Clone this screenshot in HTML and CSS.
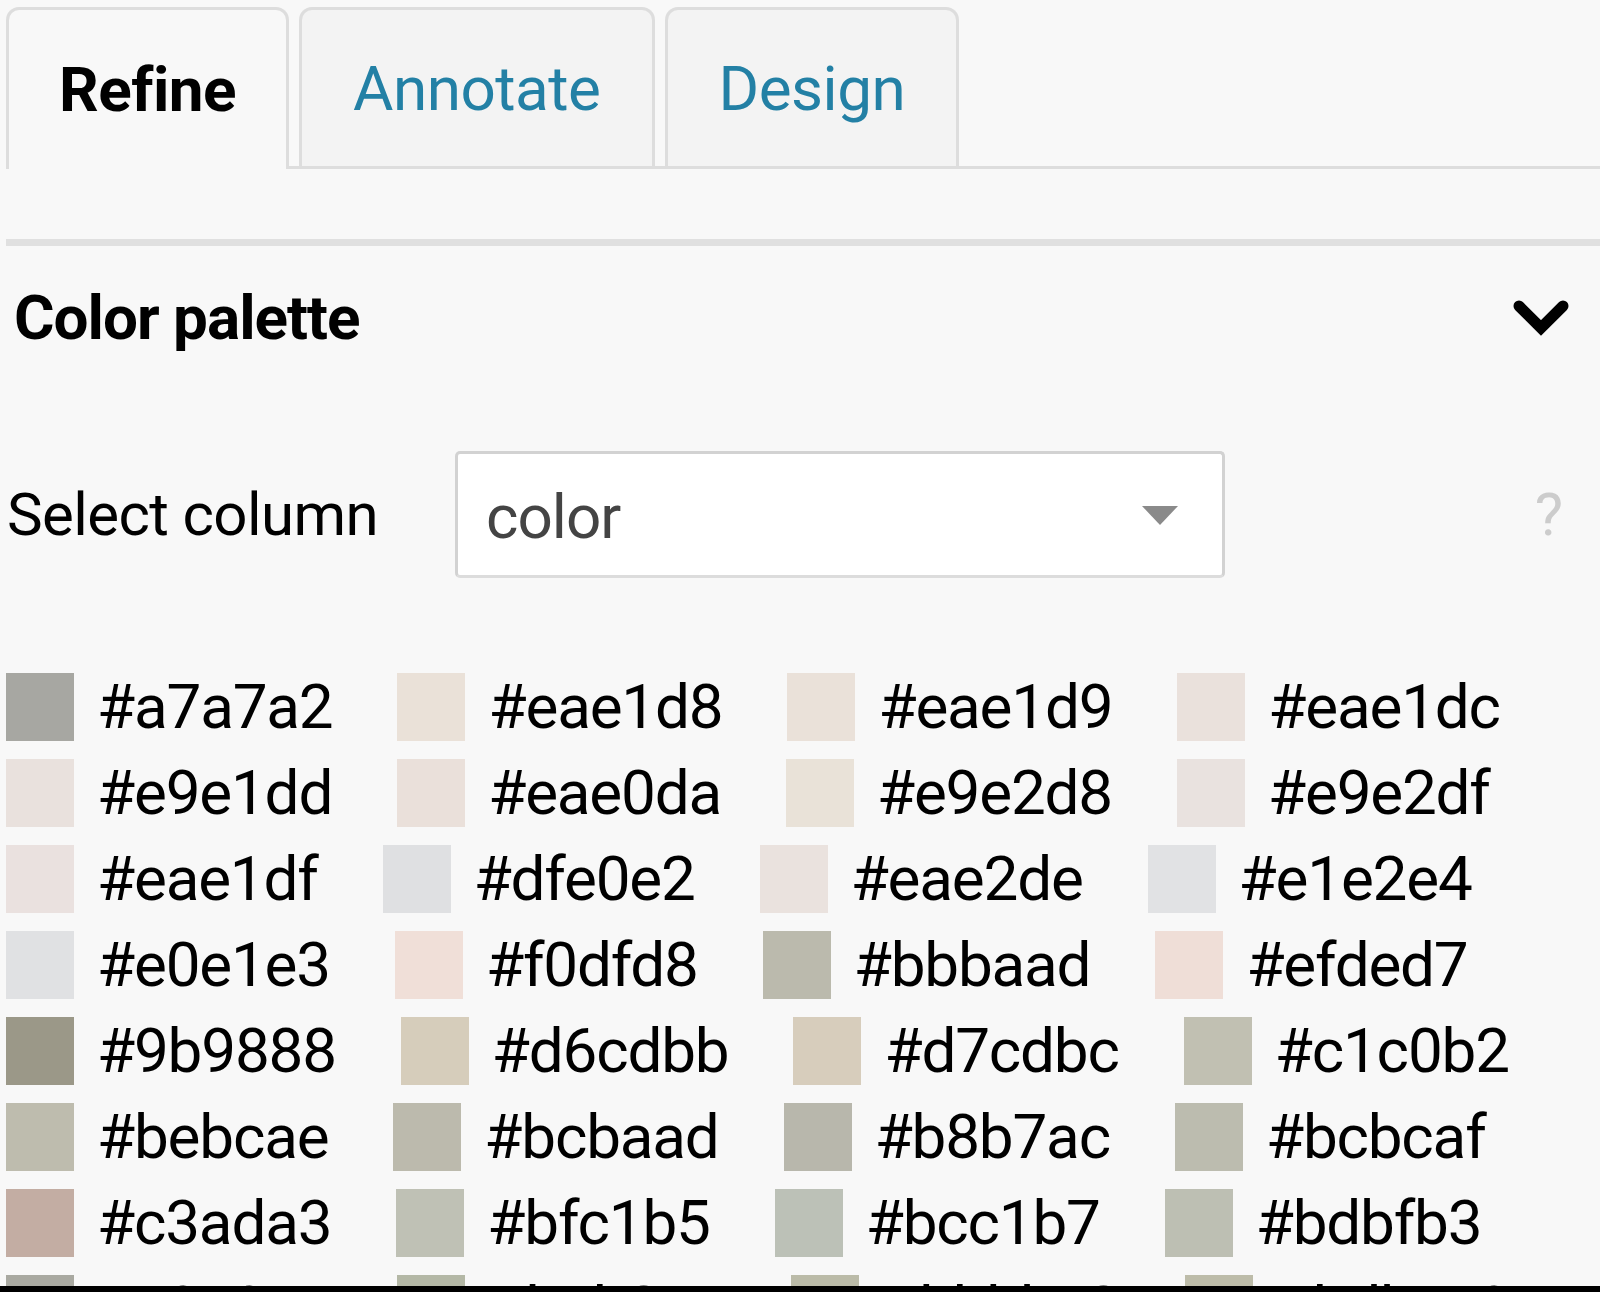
FILE: index.html
```html
<!DOCTYPE html>
<html lang="en">
<head>
<meta charset="utf-8">
<title>Color palette</title>
<link rel="stylesheet" href="styles.css">
</head>
<body>
<div class="page">
  <ul class="tabs">
    <li class="tab active">Refine</li>
    <li class="tab">Annotate</li>
    <li class="tab">Design</li>
  </ul>
  <div class="band"></div>
  <section class="panel">
    <div class="panel-head">
      <h2 class="panel-title">Color palette</h2>
      <svg class="chevron" width="60" height="42" viewBox="0 0 60 42" aria-hidden="true">
        <path d="M8 9 L30 31 L52 9" fill="none" stroke="#000" stroke-width="11" stroke-linecap="round" stroke-linejoin="miter"/>
      </svg>
    </div>
    <div class="field">
      <label class="field-label">Select column</label>
      <div class="select">
        <span class="select-value">color</span>
        <span class="caret"></span>
      </div>
      <span class="help">?</span>
    </div>
    <div class="swatches">
      <div class="item"><span class="chip" style="background:#a7a7a2"></span><span class="hex">#a7a7a2</span></div>
      <div class="item"><span class="chip" style="background:#eae1d8"></span><span class="hex">#eae1d8</span></div>
      <div class="item"><span class="chip" style="background:#eae1d9"></span><span class="hex">#eae1d9</span></div>
      <div class="item"><span class="chip" style="background:#eae1dc"></span><span class="hex">#eae1dc</span></div>
      <div class="item"><span class="chip" style="background:#e9e1dd"></span><span class="hex">#e9e1dd</span></div>
      <div class="item"><span class="chip" style="background:#eae0da"></span><span class="hex">#eae0da</span></div>
      <div class="item"><span class="chip" style="background:#e9e2d8"></span><span class="hex">#e9e2d8</span></div>
      <div class="item"><span class="chip" style="background:#e9e2df"></span><span class="hex">#e9e2df</span></div>
      <div class="item"><span class="chip" style="background:#eae1df"></span><span class="hex">#eae1df</span></div>
      <div class="item"><span class="chip" style="background:#dfe0e2"></span><span class="hex">#dfe0e2</span></div>
      <div class="item"><span class="chip" style="background:#eae2de"></span><span class="hex">#eae2de</span></div>
      <div class="item"><span class="chip" style="background:#e1e2e4"></span><span class="hex">#e1e2e4</span></div>
      <div class="item"><span class="chip" style="background:#e0e1e3"></span><span class="hex">#e0e1e3</span></div>
      <div class="item"><span class="chip" style="background:#f0dfd8"></span><span class="hex">#f0dfd8</span></div>
      <div class="item"><span class="chip" style="background:#bbbaad"></span><span class="hex">#bbbaad</span></div>
      <div class="item"><span class="chip" style="background:#efded7"></span><span class="hex">#efded7</span></div>
      <div class="item"><span class="chip" style="background:#9b9888"></span><span class="hex">#9b9888</span></div>
      <div class="item"><span class="chip" style="background:#d6cdbb"></span><span class="hex">#d6cdbb</span></div>
      <div class="item"><span class="chip" style="background:#d7cdbc"></span><span class="hex">#d7cdbc</span></div>
      <div class="item"><span class="chip" style="background:#c1c0b2"></span><span class="hex">#c1c0b2</span></div>
      <div class="item"><span class="chip" style="background:#bebcae"></span><span class="hex">#bebcae</span></div>
      <div class="item"><span class="chip" style="background:#bcbaad"></span><span class="hex">#bcbaad</span></div>
      <div class="item"><span class="chip" style="background:#b8b7ac"></span><span class="hex">#b8b7ac</span></div>
      <div class="item"><span class="chip" style="background:#bcbcaf"></span><span class="hex">#bcbcaf</span></div>
      <div class="item"><span class="chip" style="background:#c3ada3"></span><span class="hex">#c3ada3</span></div>
      <div class="item"><span class="chip" style="background:#bfc1b5"></span><span class="hex">#bfc1b5</span></div>
      <div class="item"><span class="chip" style="background:#bcc1b7"></span><span class="hex">#bcc1b7</span></div>
      <div class="item"><span class="chip" style="background:#bdbfb3"></span><span class="hex">#bdbfb3</span></div>
      <div class="item"><span class="chip" style="background:#a9a9a1"></span><span class="hex">#a9a9a1</span></div>
      <div class="item"><span class="chip" style="background:#b4b8a6"></span><span class="hex">#b4b8a6</span></div>
      <div class="item"><span class="chip" style="background:#bbbba8"></span><span class="hex">#bbbba8</span></div>
      <div class="item"><span class="chip" style="background:#bdbca9"></span><span class="hex">#bdbca9</span></div>
    </div>
  </section>
</div>
<div class="bottom-bar"></div>
</body>
</html>
```

FILE: styles.css
```css
html, body {
  margin: 0;
  padding: 0;
  background: #f8f8f8;
}

body {
  font-family: Roboto, "Liberation Sans", Arial, sans-serif;
  color: #000;
  height: 1292px;
  overflow: hidden;
}

.page {
  padding-left: 6px;
}

.tabs {
  list-style: none;
  margin: 7px 0 0 0;
  padding: 0;
  display: flex;
  gap: 10px;
  border-bottom: 3px solid #dddddd;
}

.tab {
  height: 156px;
  display: flex;
  align-items: center;
  padding: 0 51px;
  border: 3px solid #dddddd;
  border-bottom: none;
  border-radius: 13px 13px 0 0;
  background: #f3f3f3;
  color: #2380a5;
  font-size: 62px;
  font-weight: 400;
  letter-spacing: -0.5px;
}

.tab.active {
  background: #f8f8f8;
  color: #000;
  font-weight: 700;
  height: 159px;
  margin-bottom: -3px;
  padding: 0 50px;
}

.band {
  margin-top: 70px;
  height: 7px;
  background: #e0e0e0;
}

.panel-head {
  margin-top: 35px;
  display: flex;
  align-items: center;
  justify-content: space-between;
  padding-right: 29px;
}

.panel-title {
  margin: 0;
  font-size: 62px;
  font-weight: 700;
  line-height: 73px;
  padding-left: 8px;
  letter-spacing: -1px;
}

.chevron {
  display: block;
}

.field {
  margin-top: 97px;
  display: flex;
  align-items: center;
}

.field-label {
  font-size: 60px;
  width: 448px;
  padding-left: 1px;
  line-height: 70px;
  letter-spacing: -0.6px;
}

.select {
  height: 121px;
  border: 3px solid #d2d2d2;
  border-bottom-color: #dcdcdc;
  border-radius: 5px;
  background: #fff;
  display: flex;
  align-items: center;
  justify-content: space-between;
  padding: 0 44px 0 28px;
  box-sizing: content-box;
  width: 692px;
}

.select-value {
  font-size: 62px;
  color: #444;
  line-height: 70px;
  padding-top: 4px;
  letter-spacing: -1px;
}

.caret {
  width: 0;
  height: 0;
  border-left: 18px solid transparent;
  border-right: 18px solid transparent;
  border-top: 19px solid #8a8a8a;
  margin-top: 2px;
}

.help {
  margin-left: auto;
  margin-right: 37px;
  font-size: 60px;
  color: #cccccc;
  line-height: 70px;
}

.swatches {
  margin-top: 95px;
  display: flex;
  flex-wrap: wrap;
  column-gap: 65px;
  row-gap: 18px;
}

.item {
  display: flex;
  align-items: center;
  height: 68px;
}

.chip {
  display: block;
  width: 68px;
  height: 68px;
  margin-right: 23px;
}

.hex {
  font-size: 62px;
  line-height: 68px;
  letter-spacing: -1.2px;
}

.bottom-bar {
  position: fixed;
  left: 0;
  right: 0;
  bottom: 0;
  height: 6px;
  background: #000;
}
```
